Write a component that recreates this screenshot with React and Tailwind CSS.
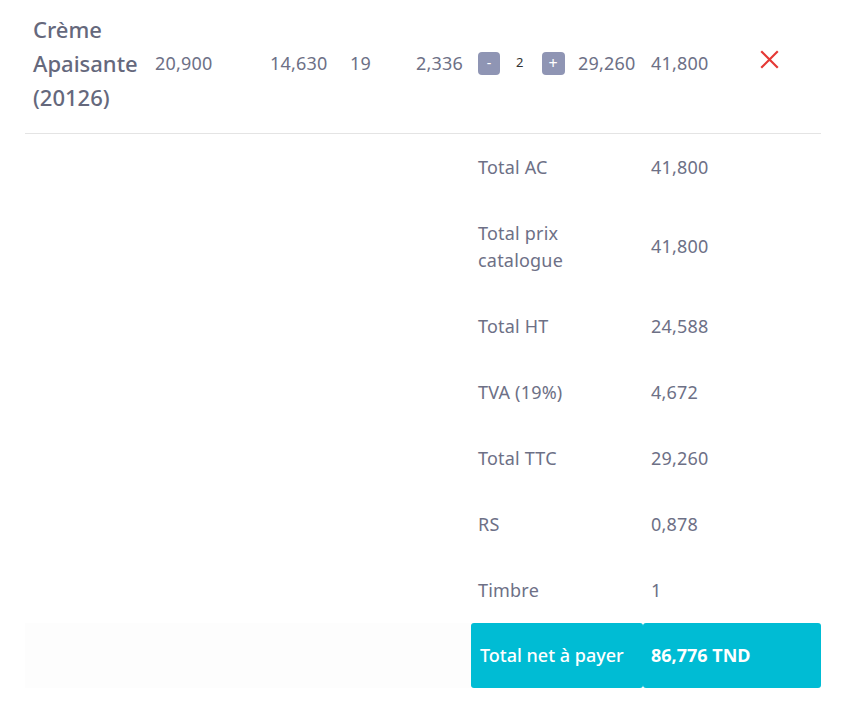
import React from "react";

export default function App() {
  const summary = [
    ["Total AC", "41,800"],
    ["Total prix catalogue", "41,800"],
    ["Total HT", "24,588"],
    ["TVA (19%)", "4,672"],
    ["Total TTC", "29,260"],
    ["RS", "0,878"],
    ["Timbre", "1"],
  ];
  return (
    <div className="w-[856px] h-[723px] bg-white text-[#6d7086] font-['Noto_Sans',sans-serif] text-[18px] tracking-[0.2px] overflow-hidden">
      <div className="ml-[25px] w-[796px]">
        <div className="grid grid-cols-[122px_115px_80px_66px_63px_99px_73px_109px_69px] items-center border-b border-[#e4e4e4] pt-[12px] pb-[19px]">
          <div className="pl-2 text-[22px] leading-[34px] font-medium tracking-normal text-[#65687c]">
            Crème Apaisante (20126)
          </div>
          <div className="pl-2">20,900</div>
          <div className="pl-2">14,630</div>
          <div className="pl-2">19</div>
          <div className="pl-2">2,336</div>
          <div className="pl-[7px] flex items-center">
            <button className="w-[22px] h-[23px] rounded-[4px] bg-[#8f95b4] text-white text-[14px] leading-none flex items-center justify-center">-</button>
            <span className="ml-[16px] mr-[18px] text-[13px] text-[#333]">2</span>
            <button className="w-[23px] h-[23px] rounded-[4px] bg-[#8f95b4] text-white text-[16px] leading-none flex items-center justify-center">+</button>
          </div>
          <div className="pl-2">29,260</div>
          <div className="pl-2">41,800</div>
          <div className="pl-2 flex items-center">
            <svg width="19" height="19" viewBox="0 0 19 19" className="-mt-[8px]">
              <path d="M2 2 L17 17 M17 2 L2 17" stroke="#e53935" strokeWidth="2.2" strokeLinecap="square" />
            </svg>
          </div>
        </div>
        <div className="grid grid-cols-[446px_172px_178px]">
          {summary.map(([l, v]) => (
            <React.Fragment key={l}>
              <div />
              <div className="pl-[7px] pr-4 py-[19.5px] leading-[27px]">{l}</div>
              <div className="pl-2 py-[19.5px] leading-[27px] flex items-center">{v}</div>
            </React.Fragment>
          ))}
          <div className="bg-[#fdfdfd] h-[65px]" />
          <div className="bg-[#00bcd4] rounded-[3px] h-[65px] flex items-center pl-[9px] text-white font-medium tracking-normal">Total net à payer</div>
          <div className="bg-[#00bcd4] rounded-[3px] h-[65px] flex items-center pl-2 text-white font-bold tracking-normal">86,776 TND</div>
        </div>
      </div>
    </div>
  );
}
